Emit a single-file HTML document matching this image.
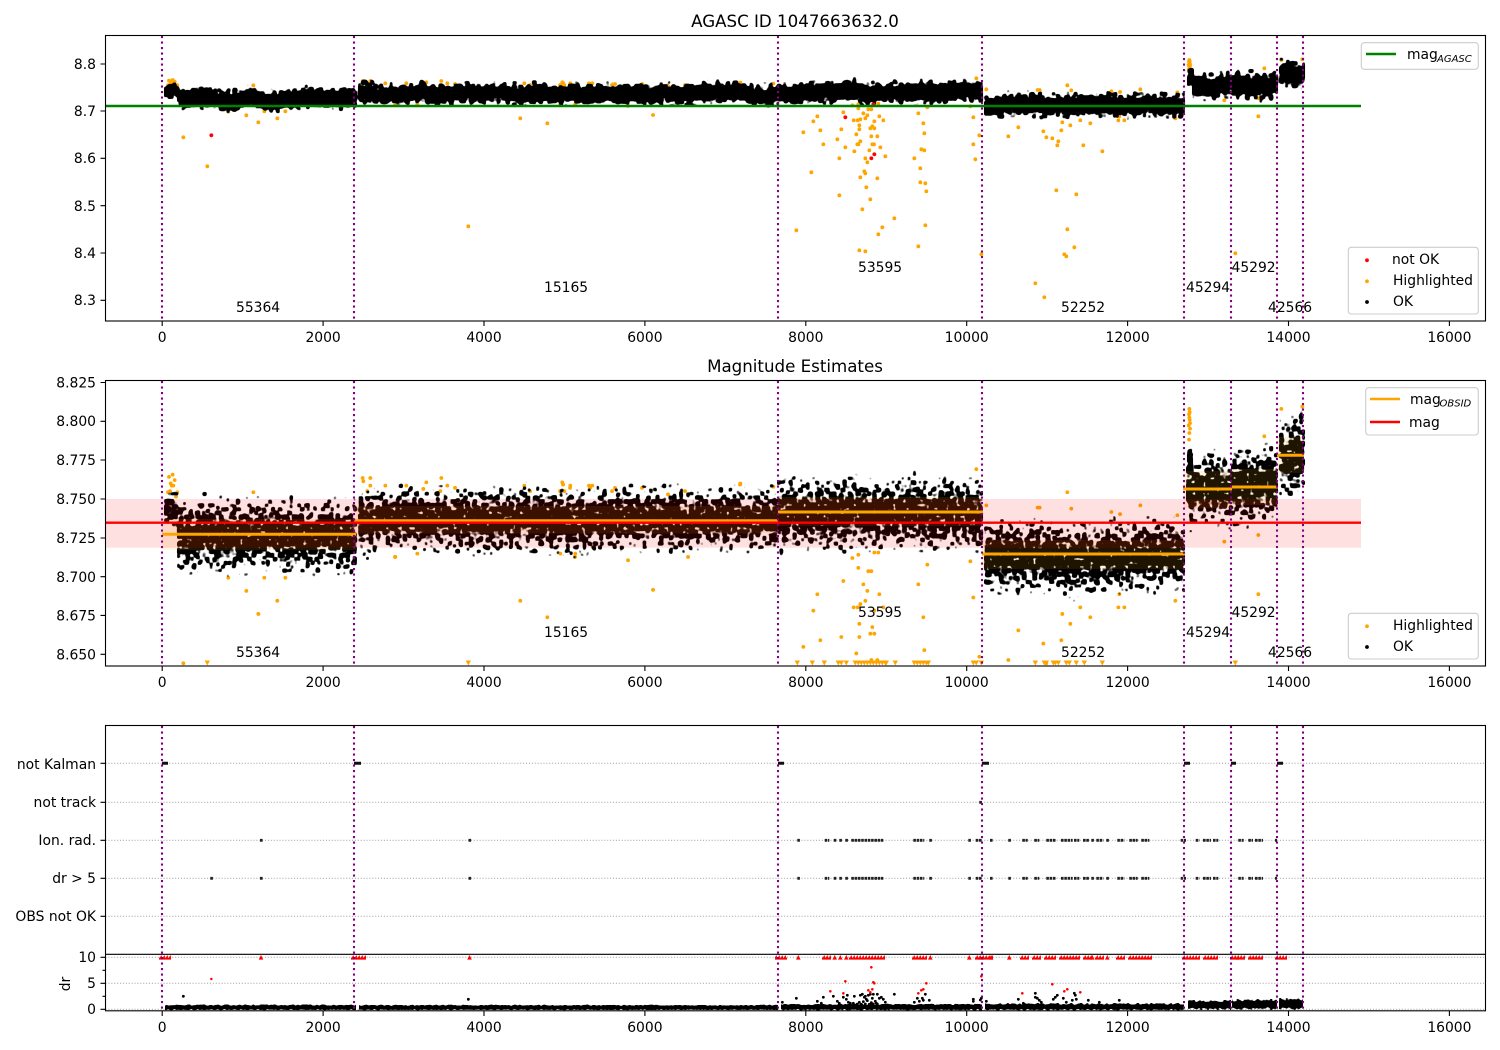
<!DOCTYPE html>
<html><head><meta charset="utf-8"><title>AGASC ID 1047663632.0</title>
<style>
html,body{margin:0;padding:0;background:#fff;width:1500px;height:1050px;overflow:hidden}
svg{display:block}
text{font-family:"DejaVu Sans",sans-serif;font-size:13.89px;fill:#000}
.t{font-size:16.67px;text-anchor:middle}
.m{text-anchor:middle}
.e{text-anchor:end}
.s{font-size:10px;font-style:italic}
.f{fill:none;stroke:#000;stroke-width:1.1}
.k{stroke:#000;stroke-width:1.1;fill:none}
.g{stroke:#b0b0b0;stroke-width:1.1;stroke-dasharray:1.1 1.8;fill:none}
.p{stroke:#800080;stroke-width:2.1;stroke-dasharray:2.1 3.4;fill:none}
.l{fill:#fff;fill-opacity:.8;stroke:#ccc;stroke-width:1.1}
.o{fill:none;stroke:#ffa500;stroke-width:3.8;stroke-linecap:round;vector-effect:non-scaling-stroke}
</style></head>
<body>
<svg xmlns="http://www.w3.org/2000/svg" width="1500" height="1050" viewBox="0 0 1500 1050">
<defs>
<clipPath id="c1"><rect x="105.5" y="35.5" width="1380" height="285.5"/></clipPath>
<clipPath id="c2"><rect x="105.5" y="380.5" width="1380" height="285.5"/></clipPath>
<clipPath id="c4"><rect x="105.5" y="954" width="1380" height="57"/></clipPath>
<linearGradient id="g2" x1="0" y1="0" x2="0" y2="1">
<stop offset="0" stop-opacity=".26"/><stop offset=".1" stop-opacity=".33"/><stop offset=".2" stop-opacity=".39"/><stop offset=".3" stop-opacity=".44"/><stop offset=".4" stop-opacity=".49"/><stop offset=".6" stop-opacity=".49"/><stop offset=".7" stop-opacity=".44"/><stop offset=".8" stop-opacity=".39"/><stop offset=".9" stop-opacity=".33"/><stop offset="1" stop-opacity=".26"/>
</linearGradient>
<linearGradient id="g1" x1="0" y1="0" x2="0" y2="1">
<stop offset="0" stop-opacity=".26"/><stop offset=".12" stop-opacity=".36"/><stop offset=".25" stop-opacity=".5"/><stop offset=".4" stop-opacity=".66"/><stop offset=".6" stop-opacity=".66"/><stop offset=".75" stop-opacity=".5"/><stop offset=".88" stop-opacity=".36"/><stop offset="1" stop-opacity=".26"/>
</linearGradient>
<linearGradient id="g4" x1="0" y1="0" x2="0" y2="1">
<stop offset="0" stop-opacity=".34"/><stop offset=".15" stop-opacity=".58"/><stop offset=".3" stop-opacity=".95"/><stop offset=".7" stop-opacity=".95"/><stop offset=".85" stop-opacity=".58"/><stop offset="1" stop-opacity=".34"/>
</linearGradient>
<filter id="n1" filterUnits="userSpaceOnUse" x="105" y="36" width="1381" height="285" color-interpolation-filters="sRGB">
<feTurbulence type="fractalNoise" baseFrequency=".05 .004" numOctaves="2" seed="5" result="w"/>
<feColorMatrix in="w" type="matrix" values="1.6 0 0 0 -.3 0 0 0 0 .5 0 0 0 0 0 0 0 0 0 1" result="w2"/>
<feDisplacementMap in="SourceGraphic" in2="w2" scale="5" xChannelSelector="G" yChannelSelector="R" result="d"/>
<feTurbulence type="fractalNoise" baseFrequency=".3 .26" numOctaves="1" seed="8" result="n"/>
<feColorMatrix in="n" type="matrix" values="0 0 0 0 0 0 0 0 0 0 0 0 0 0 0 0 0 0 1 0" result="na"/>
<feComposite in="d" in2="na" operator="arithmetic" k1="0" k2=".5" k3=".5" k4="0"/>
<feComponentTransfer><feFuncA type="linear" slope="14" intercept="-6.5"/></feComponentTransfer>
<feMorphology operator="dilate" radius="1"/>
<feGaussianBlur stdDeviation=".8"/>
<feComponentTransfer><feFuncA type="linear" slope="3.5" intercept="-1.2"/></feComponentTransfer>
</filter>
<filter id="n2" filterUnits="userSpaceOnUse" x="105" y="381" width="1381" height="285" color-interpolation-filters="sRGB">
<feTurbulence type="fractalNoise" baseFrequency=".05 .004" numOctaves="2" seed="5" result="w"/>
<feColorMatrix in="w" type="matrix" values="1.6 0 0 0 -.3 0 0 0 0 .5 0 0 0 0 0 0 0 0 0 1" result="w2"/>
<feDisplacementMap in="SourceGraphic" in2="w2" scale="14" xChannelSelector="G" yChannelSelector="R" result="d"/>
<feTurbulence type="fractalNoise" baseFrequency=".3 .26" numOctaves="1" seed="11" result="n"/>
<feColorMatrix in="n" type="matrix" values="0 0 0 0 0 0 0 0 0 0 0 0 0 0 0 0 0 0 1 0" result="na"/>
<feComposite in="d" in2="na" operator="arithmetic" k1="0" k2=".5" k3=".5" k4="0"/>
<feComponentTransfer><feFuncA type="linear" slope="14" intercept="-6.5"/></feComponentTransfer>
<feMorphology operator="dilate" radius="1"/>
<feGaussianBlur stdDeviation=".8"/>
<feComponentTransfer><feFuncA type="linear" slope="3.5" intercept="-1.2"/></feComponentTransfer>
</filter>
<filter id="n4" filterUnits="userSpaceOnUse" x="105" y="990" width="1381" height="22" color-interpolation-filters="sRGB">
<feTurbulence type="fractalNoise" baseFrequency=".3" numOctaves="1" seed="3" result="n"/>
<feColorMatrix in="n" type="matrix" values="0 0 0 0 0 0 0 0 0 0 0 0 0 0 0 0 0 0 1 0" result="na"/>
<feComposite in="SourceGraphic" in2="na" operator="arithmetic" k1="0" k2=".5" k3=".5" k4="0"/>
<feComponentTransfer><feFuncA type="linear" slope="14" intercept="-6.5"/></feComponentTransfer>
</filter>
<pattern id="rt" patternUnits="userSpaceOnUse" x="0" y="955" width="3" height="5"><path d="M0 4.6H4.4L2.2 0ZM-3 4.6H1.4L-.8 0Z" fill="#f00"/></pattern>
</defs>
<rect width="1500" height="1050" fill="#fff"/>

<!-- PANEL 1 -->
<g clip-path="url(#c1)">
<path class="o" transform="translate(700 60) scale(.3333)" d="M412 238h.1M481 244h.1M472 253h.1M475 253h.1M517 253h.1M522 253h.1M370 253h.1M436 262h.1M541 262h.1M463 274h.1M508 271h.1M418 295h.1M496 295h.1M556 289h.1M502 307h.1M334 337h.1M493 334h.1M496 340h.1M481 352h.1M532 355h.1M499 382h.1M418 406h.1M511 418h.1M487 448h.1M583 475h.1M547 502h.1M535 523h.1M289 511h.1M478 571h.1M496 574h.1M655 559h.1M676 496h.1M679 394h.1M676 370h.1M661 367h.1M661 325h.1M643 295h.1M664 268h.1M673 271h.1M820 253h.1M826 298h.1M844 583h.1M1057 235h.1M1075 244h.1M1072 256h.1M1150 256h.1M1069 391h.1M1129 403h.1M1102 508h.1M1123 562h.1M1093 583h.1M1099 589h.1M1006 670h.1M1033 712h.1"/>
<path class="o" transform="translate(100 30) scale(.3333)" d="M322 409h.1M1105 589h.1"/>
<path class="o" transform="translate(1100 30) scale(.3333)" d="M406 670h.1M7 364h.1"/>
<g id="og">
<path class="o" transform="translate(700 60) scale(.3333)" d="M121 68h.1M220 71h.1M829 55h.1M859 88h.1M1013 90h.1M1019 90h.1M1102 76h.1M1114 91h.1M430 157h.1M352 169h.1M340 184h.1M461 181h.1M473 181h.1M481 178h.1M496 175h.1M502 166h.1M490 160h.1M475 145h.1M505 148h.1M514 148h.1M538 169h.1M550 181h.1M523 184h.1M478 196h.1M478 208h.1M511 205h.1M517 199h.1M523 205h.1M424 208h.1M361 211h.1M310 217h.1M469 223h.1M514 229h.1M532 229h.1M673 220h.1M670 190h.1M655 160h.1M682 142h.1M820 172h.1M838 226h.1M811 139h.1M457 136h.1M475 133h.1M535 131h.1M523 131h.1M955 202h.1M925 229h.1M1030 214h.1M1039 232h.1M1084 211h.1M1087 187h.1M1111 196h.1M1141 181h.1M1171 190h.1"/>
<path class="o" transform="translate(100 30) scale(.3333)" d="M204 166h.1M210 165h.1M215 160h.1M220 160h.1M232 166h.1M207 152h.1M212 158h.1M218 150h.1M224 155h.1M228 170h.1M460 166h.1M385 244h.1M439 256h.1M475 277h.1M532 265h.1M493 244h.1M556 244h.1M250 322h.1M1261 265h.1M1342 280h.1M886 225h.1M952 222h.1M1381 222h.1M1426 222h.1M788 153h.1M790 156h.1M811 153h.1M811 160h.1M802 165h.1M856 160h.1M919 160h.1M970 163h.1M979 157h.1M1024 153h.1M1021 165h.1M1042 160h.1M1273 160h.1M1393 165h.1M1387 157h.1M1411 160h.1M1467 160h.1M1477 160h.1"/>
<path class="o" transform="translate(1100 30) scale(.3333)" d="M34 184h.1M121 178h.1M232 187h.1M226 265h.1M55 271h.1M73 271h.1M58 259h.1M373 211h.1M493 115h.1M475 205h.1M475 259h.1M544 90h.1M607 88h.1M268 90h.1M267 95h.1M269 100h.1M266 105h.1M270 108h.1M268 112h.1M267 118h.1M269 93h.1M270 103h.1M268 98h.1"/>
<path class="o" d="M653 115h.1M563 83h.1M570 84h.1M590 84h.1M615 84h.1M642 84h.1M740 83h.1M530 85h.1M455 84h.1M612 85h.1M560 85h.1M668 86h.1M685 85h.1M1120 92h.1M1005 104h.1M1028 108h.1M395 105h.1M575 105h.1M628 106h.1M688 105h.1"/>
</g>
<g filter="url(#n1)">
<rect x="165" y="84" width="13" height="17" fill="url(#g1)"/>
<rect x="178" y="86" width="178" height="26" fill="url(#g1)"/>
<rect x="359" y="81" width="419" height="25" fill="url(#g1)"/>
<rect x="778" y="79" width="204" height="26" fill="url(#g1)"/>
<rect x="985" y="91" width="199" height="27" fill="url(#g1)"/>
<rect x="1188" y="66" width="5" height="24" fill="url(#g1)"/>
<rect x="1193" y="71" width="38" height="29" fill="url(#g1)"/>
<rect x="1232" y="69" width="45" height="31" fill="url(#g1)"/>
<rect x="1280" y="58" width="24" height="31" fill="url(#g1)"/>
</g>
<path fill="none" stroke="#000" stroke-width="3.4" stroke-linecap="round" d="M1117 116h.1M357 97h.1"/>
<path fill="none" stroke="#f00" stroke-width="3.8" stroke-linecap="round" d="M845.3 117.3h.1M874.3 154.3h.1M871.3 158.3h.1M873.3 104.3h.1M211.3 135.3h.1"/>
<line x1="105.5" x2="1361" y1="106" y2="106" stroke="#008000" stroke-width="2.4"/>
<path class="p" d="M162 36V321M354 36V321M778 36V321M982 36V321M1184 36V321M1231 36V321M1277 36V321M1303 36V321"/>
</g>
<rect class="f" x="105.5" y="35.5" width="1380" height="285.5"/>
<path class="k" d="M162.2 321v5M323.1 321v5M484 321v5M644.9 321v5M805.8 321v5M966.7 321v5M1127.6 321v5M1288.5 321v5M1449.4 321v5M105.5 64h-5M105.5 111h-5M105.5 158.3h-5M105.5 205.7h-5M105.5 253h-5M105.5 300.3h-5"/>
<text class="t" x="795" y="27">AGASC ID 1047663632.0</text>
<text class="e" x="96" y="69">8.8</text><text class="e" x="96" y="116">8.7</text><text class="e" x="96" y="163">8.6</text><text class="e" x="96" y="211">8.5</text><text class="e" x="96" y="258">8.4</text><text class="e" x="96" y="305">8.3</text>
<text class="m" x="162.2" y="342">0</text><text class="m" x="323.1" y="342">2000</text><text class="m" x="484" y="342">4000</text><text class="m" x="644.9" y="342">6000</text><text class="m" x="805.8" y="342">8000</text><text class="m" x="966.7" y="342">10000</text><text class="m" x="1127.6" y="342">12000</text><text class="m" x="1288.5" y="342">14000</text><text class="m" x="1449.4" y="342">16000</text>
<text x="236" y="312">55364</text><text x="544" y="292">15165</text><text x="858" y="272">53595</text><text x="1061" y="312">52252</text><text x="1186" y="292">45294</text><text x="1231.5" y="272">45292</text><text x="1268" y="312">42566</text>
<rect class="l" x="1361.3" y="42.7" width="117" height="26.6" rx="3"/>
<line x1="1366" x2="1396" y1="54" y2="54" stroke="#008000" stroke-width="2.4"/>
<text x="1407" y="59">mag</text><text class="s" x="1437" y="62">AGASC</text>
<rect class="l" x="1348.3" y="247.3" width="130" height="66.7" rx="3"/>
<circle cx="1367" cy="260.3" r="1.9" fill="#f00"/><circle cx="1367" cy="281.3" r="1.9" fill="#ffa500"/><circle cx="1367" cy="302" r="1.9" fill="#000"/>
<text x="1392" y="264">not OK</text><text x="1393" y="285">Highlighted</text><text x="1393" y="306">OK</text>

<!-- PANEL 2 -->
<g clip-path="url(#c2)">
<use href="#og" transform="translate(0 211.5) scale(1 3.29)"/>
<path fill="#ffa500" d="M204.6 660.5h5.4l-2.7 5zM465.6 660.5h5.4l-2.7 5zM1232.6 660.5h5.4l-2.7 5zM1099.6 660.5h5.4l-2.7 5zM794.6 660.5h5.4l-2.7 5zM809.6 660.5h5.4l-2.7 5zM821.6 660.5h5.4l-2.7 5zM835.6 660.5h5.4l-2.7 5zM838.6 660.5h5.4l-2.7 5zM843.6 660.5h5.4l-2.7 5zM852.6 660.5h5.4l-2.7 5zM855.6 660.5h5.4l-2.7 5zM858.6 660.5h5.4l-2.7 5zM861.6 660.5h5.4l-2.7 5zM864.6 660.5h5.4l-2.7 5zM867.6 660.5h5.4l-2.7 5zM870.6 660.5h5.4l-2.7 5zM873.6 660.5h5.4l-2.7 5zM876.6 660.5h5.4l-2.7 5zM879.6 660.5h5.4l-2.7 5zM882.6 660.5h5.4l-2.7 5zM883.6 660.5h5.4l-2.7 5zM892.6 660.5h5.4l-2.7 5zM911.6 660.5h5.4l-2.7 5zM914.6 660.5h5.4l-2.7 5zM917.6 660.5h5.4l-2.7 5zM920.6 660.5h5.4l-2.7 5zM923.6 660.5h5.4l-2.7 5zM925.6 660.5h5.4l-2.7 5zM970.6 660.5h5.4l-2.7 5zM973.6 660.5h5.4l-2.7 5zM978.6 660.5h5.4l-2.7 5zM1032.6 660.5h5.4l-2.7 5zM1041.6 660.5h5.4l-2.7 5zM1043.6 660.5h5.4l-2.7 5zM1050.6 660.5h5.4l-2.7 5zM1052.6 660.5h5.4l-2.7 5zM1055.6 660.5h5.4l-2.7 5zM1063.6 660.5h5.4l-2.7 5zM1066.6 660.5h5.4l-2.7 5zM1073.6 660.5h5.4l-2.7 5zM1081.6 660.5h5.4l-2.7 5z"/>
<g filter="url(#n2)">
<rect x="165" y="494" width="13" height="38" fill="url(#g2)"/>
<rect x="178" y="496" width="178" height="78" fill="url(#g2)"/>
<rect x="359" y="485" width="419" height="69" fill="url(#g2)"/>
<rect x="778" y="475" width="204" height="78" fill="url(#g2)"/>
<rect x="985" y="519" width="199" height="77" fill="url(#g2)"/>
<rect x="1187" y="451" width="44" height="78" fill="url(#g2)"/>
<rect x="1188" y="440" width="4" height="30" fill="url(#g2)" fill-opacity=".85"/>
<rect x="1232" y="442" width="45" height="85" fill="url(#g2)"/>
<rect x="1280" y="412" width="24" height="87" fill="url(#g2)"/>
</g>
<g fill="#ffa500" fill-opacity=".12">
<rect x="162" y="519" width="194" height="31"/>
<rect x="354" y="506" width="424" height="27.5"/>
<rect x="778" y="497" width="204" height="29"/>
<rect x="982" y="540" width="202" height="29"/>
<rect x="1184" y="471" width="47" height="37"/>
<rect x="1231" y="469" width="46" height="36"/>
<rect x="1277" y="437" width="26" height="36"/>
</g>
<rect x="105.5" y="499" width="1255.5" height="48.7" fill="#f00" fill-opacity=".12"/>
<path fill="none" stroke="#ffa500" stroke-width="3" d="M162 534.3H356M354 520.7H778M778 512H983M982 554H1185M1183 489H1232M1231 487H1278M1277 455.3H1304"/>
<line x1="105.5" x2="1361" y1="522.7" y2="522.7" stroke="#f00" stroke-width="2.4"/>
<path class="p" d="M162 381V666M354 381V666M778 381V666M982 381V666M1184 381V666M1231 381V666M1277 381V666M1303 381V666"/>
</g>
<rect class="f" x="105.5" y="380.5" width="1380" height="285.5"/>
<path class="k" d="M162.2 666v5M323.1 666v5M484 666v5M644.9 666v5M805.8 666v5M966.7 666v5M1127.6 666v5M1288.5 666v5M1449.4 666v5M105.5 382.5h-5M105.5 421.3h-5M105.5 460h-5M105.5 499h-5M105.5 538h-5M105.5 576.7h-5M105.5 615.4h-5M105.5 654.3h-5"/>
<text class="t" x="795" y="372">Magnitude Estimates</text>
<text class="e" x="96" y="387.5">8.825</text><text class="e" x="96" y="426">8.800</text><text class="e" x="96" y="465">8.775</text><text class="e" x="96" y="504">8.750</text><text class="e" x="96" y="543">8.725</text><text class="e" x="96" y="582">8.700</text><text class="e" x="96" y="620.5">8.675</text><text class="e" x="96" y="659.5">8.650</text>
<text class="m" x="162.2" y="687">0</text><text class="m" x="323.1" y="687">2000</text><text class="m" x="484" y="687">4000</text><text class="m" x="644.9" y="687">6000</text><text class="m" x="805.8" y="687">8000</text><text class="m" x="966.7" y="687">10000</text><text class="m" x="1127.6" y="687">12000</text><text class="m" x="1288.5" y="687">14000</text><text class="m" x="1449.4" y="687">16000</text>
<text x="236" y="657">55364</text><text x="544" y="637">15165</text><text x="858" y="617">53595</text><text x="1061" y="657">52252</text><text x="1186" y="637">45294</text><text x="1231.5" y="617">45292</text><text x="1268" y="657">42566</text>
<rect class="l" x="1365.7" y="387.7" width="112.6" height="47.3" rx="3"/>
<line x1="1370" x2="1400" y1="399" y2="399" stroke="#ffa500" stroke-width="2.4"/>
<line x1="1370" x2="1400" y1="422" y2="422" stroke="#f00" stroke-width="2.4"/>
<text x="1410" y="404">mag</text><text class="s" x="1439.5" y="406.5">OBSID</text><text x="1409" y="427">mag</text>
<rect class="l" x="1348.3" y="613.3" width="130" height="45.7" rx="3"/>
<circle cx="1367" cy="626.3" r="1.9" fill="#ffa500"/><circle cx="1367" cy="647" r="1.9" fill="#000"/>
<text x="1393" y="630">Highlighted</text><text x="1393" y="651">OK</text>

<!-- PANEL 3 -->
<path class="g" d="M105.5 763.3H1485.5M105.5 802.3H1485.5M105.5 840.3H1485.5M105.5 878.3H1485.5M105.5 916.3H1485.5M105.5 957.3H1485.5M105.5 983.3H1485.5M105.5 1009.3H1485.5"/>
<g id="fl" fill="none" stroke="#222" stroke-width="2.8" stroke-dasharray="2.6 .7">
<path d="M797.3 840.3h2.6M824.7 840.3H829.3M833.7 840.3h2.6M839.3 840.3h2.6M845.3 840.3h2.6M851.3 840.3H883.3M913.3 840.3H924.3M929.3 840.3h2.6M968.3 840.3h2.6M975.7 840.3H981.7M990 840.3h2.6M1008.3 840.3h2.6M1022.3 840.3H1027.7M1034.3 840.3H1039.3M1046.3 840.3H1055.7M1061 840.3H1072.7M1074 840.3H1079.3M1083 840.3H1089.3M1091.3 840.3h2.6M1096.3 840.3H1103.3M1106.3 840.3h2.6M1117.3 840.3H1124.3M1129.3 840.3H1137.7M1141.3 840.3H1149.3M1180.7 840.3H1186M1195.7 840.3H1199.3M1203 840.3H1211M1213 840.3H1218.3M1238.3 840.3H1243.7M1248.3 840.3H1253M1255 840.3H1263M1275 840.3h2M260 840.3h2.6M468.5 840.3h2.6"/>
</g>
<use href="#fl" transform="translate(0 38)"/>
<path fill="none" stroke="#222" stroke-width="2.8" stroke-dasharray="2.6 .7" d="M210.3 878.3h2.6M979.3 802.3h2.6"/>
<path fill="none" stroke="#111" stroke-width="3" d="M162 763.3H168M354 763.3H361M778 763.3H784M982 763.3H989M1184 763.3H1190M1231 763.3H1236M1277 763.3H1283"/>

<!-- dr axis -->
<g clip-path="url(#c4)">
<g fill="url(#rt)">
<rect x="159" y="955" width="12" height="5"/><rect x="351" y="955" width="15" height="5"/><rect x="775" y="955" width="12" height="5"/><rect x="978" y="955" width="15" height="5"/><rect x="1182" y="955" width="12" height="5"/><rect x="1230" y="955" width="9" height="5"/><rect x="1275" y="955" width="12" height="5"/>
<rect x="822" y="955" width="9" height="5"/><rect x="849" y="955" width="36" height="5"/><rect x="912" y="955" width="15" height="5"/><rect x="975" y="955" width="9" height="5"/><rect x="1020" y="955" width="9" height="5"/><rect x="1032" y="955" width="9" height="5"/><rect x="1044" y="955" width="12" height="5"/><rect x="1059" y="955" width="15" height="5"/><rect x="1074" y="955" width="6" height="5"/><rect x="1083" y="955" width="9" height="5"/><rect x="1095" y="955" width="9" height="5"/><rect x="1116" y="955" width="9" height="5"/><rect x="1128" y="955" width="12" height="5"/><rect x="1140" y="955" width="12" height="5"/><rect x="1194" y="955" width="6" height="5"/><rect x="1203" y="955" width="9" height="5"/><rect x="1212" y="955" width="6" height="5"/><rect x="1236" y="955" width="9" height="5"/><rect x="1248" y="955" width="6" height="5"/><rect x="1254" y="955" width="9" height="5"/>
</g>
<path fill="#f00" d="M796 959.6h4.6l-2.3-4.6zM832.4 959.6h4.6l-2.3-4.6zM838 959.6h4.6l-2.3-4.6zM844 959.6h4.6l-2.3-4.6zM928 959.6h4.6l-2.3-4.6zM967 959.6h4.6l-2.3-4.6zM988.7 959.6h4.6l-2.3-4.6zM1007 959.6h4.6l-2.3-4.6zM1090 959.6h4.6l-2.3-4.6zM1105 959.6h4.6l-2.3-4.6zM258.7 959.6h4.6l-2.3-4.6zM467.2 959.6h4.6l-2.3-4.6z"/>
<g filter="url(#n4)">
<rect x="165" y="1004.4" width="191" height="6" fill="url(#g4)"/>
<rect x="359" y="1004.6" width="419" height="5.8" fill="url(#g4)"/>
<rect x="781" y="1003.6" width="201" height="6.9" fill="url(#g4)"/>
<rect x="985" y="1003" width="199" height="7.5" fill="url(#g4)"/>
<rect x="1188" y="1000" width="43" height="10" fill="url(#g4)"/>
<rect x="1232" y="999" width="45" height="11" fill="url(#g4)"/>
<rect x="1279" y="998" width="24" height="12" fill="url(#g4)"/>
</g>
<path fill="none" stroke="#000" stroke-width="2.8" stroke-linecap="round" vector-effect="non-scaling-stroke" transform="translate(760 750) scale(.3333)" d="M67 757h.1M109 745h.1M172 754h.1M184 760h.1M190 742h.1M220 739h.1M232 754h.1M238 760h.1M244 766h.1M250 742h.1M262 736h.1M259 748h.1M265 757h.1M271 760h.1M283 739h.1M298 757h.1M301 736h.1M307 733h.1M313 742h.1M316 739h.1M319 748h.1M325 736h.1M331 733h.1M337 745h.1M340 733h.1M346 754h.1M352 733h.1M358 745h.1M364 742h.1M370 748h.1M376 757h.1M403 733h.1M463 757h.1M472 745h.1M478 754h.1M487 745h.1M490 751h.1M496 733h.1M508 751h.1M640 748h.1M640 754h.1M661 750h.1M664 745h.1M679 754h.1M775 748h.1M826 730h.1M826 742h.1M832 745h.1M838 751h.1M844 757h.1M886 742h.1M880 748h.1M892 736h.1M910 745h.1M919 757h.1M937 751h.1M943 730h.1M946 736h.1M949 748h.1M985 751h.1M1018 757h.1M1078 751h.1M790 760h.1M310 755h.1M322 752h.1M334 758h.1M349 760h.1M280 760h.1M292 762h.1M304 763h.1M316 762h.1M328 763h.1M340 762h.1M352 762h.1"/>
<path fill="none" stroke="#000" stroke-width="2.8" stroke-linecap="round" d="M183.3 996.3h.1M468.3 999.3h.1"/>
<path fill="none" stroke="#f00" stroke-width="2.6" stroke-linecap="round" vector-effect="non-scaling-stroke" transform="translate(760 750) scale(.3333)" d="M211 724h.1M250 730h.1M256 694h.1M325 721h.1M331 727h.1M337 718h.1M334 652h.1M340 697h.1M343 700h.1M475 730h.1M484 721h.1M490 718h.1M499 700h.1M664 679h.1M787 730h.1M877 703h.1M913 724h.1M922 718h.1M961 727h.1"/>
<path fill="none" stroke="#f00" stroke-width="2.4" stroke-linecap="round" d="M211.3 979h.1"/>
</g>
<path class="p" d="M162 726V1011M354 726V1011M778 726V1011M982 726V1011M1184 726V1011M1231 726V1011M1277 726V1011M1303 726V1011"/>
<rect class="f" x="105.5" y="725.5" width="1380" height="285.3"/>
<line class="k" x1="105.5" x2="1485.5" y1="954.3" y2="954.3"/>
<path class="k" d="M162.2 1011v5M323.1 1011v5M484 1011v5M644.9 1011v5M805.8 1011v5M966.7 1011v5M1127.6 1011v5M1288.5 1011v5M1449.4 1011v5M105.5 763.3h-5M105.5 802.3h-5M105.5 840.3h-5M105.5 878.3h-5M105.5 916.3h-5M105.5 957.3h-5M105.5 983.3h-5M105.5 1009.3h-5M105.5 970.3h-3M105.5 996.3h-3"/>
<text class="e" x="96" y="769">not Kalman</text><text class="e" x="96" y="807">not track</text><text class="e" x="96" y="845">Ion. rad.</text><text class="e" x="96" y="883">dr &gt; 5</text><text class="e" x="96" y="921">OBS not OK</text>
<text class="e" x="96" y="962">10</text><text class="e" x="96" y="988">5</text><text class="e" x="96" y="1014">0</text>
<text class="m" transform="translate(70 984) rotate(-90)">dr</text>
<text class="m" x="162.2" y="1032">0</text><text class="m" x="323.1" y="1032">2000</text><text class="m" x="484" y="1032">4000</text><text class="m" x="644.9" y="1032">6000</text><text class="m" x="805.8" y="1032">8000</text><text class="m" x="966.7" y="1032">10000</text><text class="m" x="1127.6" y="1032">12000</text><text class="m" x="1288.5" y="1032">14000</text><text class="m" x="1449.4" y="1032">16000</text>
</svg>
</body></html>
